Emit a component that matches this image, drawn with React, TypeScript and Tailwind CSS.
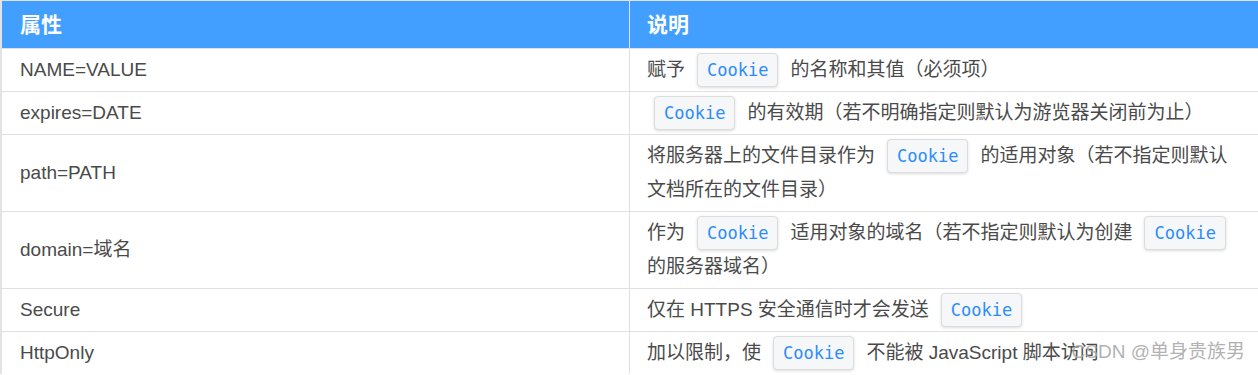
const rows: { name: string; desc: React.ReactNode }[] = [
  {
    name: 'NAME=VALUE',
    desc: (
      <>
        赋予<Code />的名称和其值（必须项）
      </>
    ),
  },
  {
    name: 'expires=DATE',
    desc: (
      <>
        <Code first />的有效期（若不明确指定则默认为游览器关闭前为止）
      </>
    ),
  },
  {
    name: 'path=PATH',
    desc: (
      <>
        将服务器上的文件目录作为<Code />的适用对象（若不指定则默认文档所在的文件目录）
      </>
    ),
  },
  {
    name: 'domain=域名',
    desc: (
      <>
        作为<Code />适用对象的域名（若不指定则默认为创建<Code />的服务器域名）
      </>
    ),
  },
  {
    name: 'Secure',
    desc: (
      <>
        仅在 HTTPS 安全通信时才会发送<Code />
      </>
    ),
  },
  {
    name: 'HttpOnly',
    desc: (
      <>
        加以限制，使<Code />不能被 JavaScript 脚本访问
      </>
    ),
  },
]

function Code({ first }: { first?: boolean }) {
  return (
    <code
      className={
        (first ? 'ml-[7px] mr-[12px] ' : 'mx-[12px] ') +
        'inline-block rounded-[4px] border border-[#dcdcdc] bg-[#f6f7f8] px-[9px] align-top text-[17px] leading-[32px] text-[#2b8cff] shadow-[0_1px_3px_rgba(0,0,0,0.14)] [font-family:"DejaVu_Sans_Mono",monospace]'
      }
    >
      Cookie
    </code>
  )
}

export default function App() {
  return (
    <div className="relative h-[375px] w-[1258px] overflow-hidden bg-white [font-family:'Liberation_Sans','Noto_Sans_CJK_SC',sans-serif]">
      <div className="border-l-2 border-t border-[#e3e3e3]">
        {/* Header */}
        <div className="grid h-[47px] grid-cols-[628px_1fr] bg-[#429fff] text-[21px] font-bold text-white">
          <div className="flex items-center border-r border-[#d8e6f5] px-[18px]">属性</div>
          <div className="flex items-center px-[17px]">说明</div>
        </div>

        {/* Body */}
        {rows.map((row) => (
          <div
            key={row.name}
            className="grid grid-cols-[628px_1fr] border-t border-[#e0e0e0] text-[19px] leading-[34px] text-[#4a4a4a]"
          >
            <div className="flex items-center border-r border-[#e0e0e0] px-[18px] py-[4px]">
              {row.name}
            </div>
            <div className="px-[17px] py-[4px] pr-[20px]">{row.desc}</div>
          </div>
        ))}
      </div>

      {/* Watermark */}
      <div className="absolute right-[13px] top-[338px] text-[19px] leading-[28px] text-[#a8a8a8]/90">
        CSDN @单身贵族男
      </div>
    </div>
  )
}
